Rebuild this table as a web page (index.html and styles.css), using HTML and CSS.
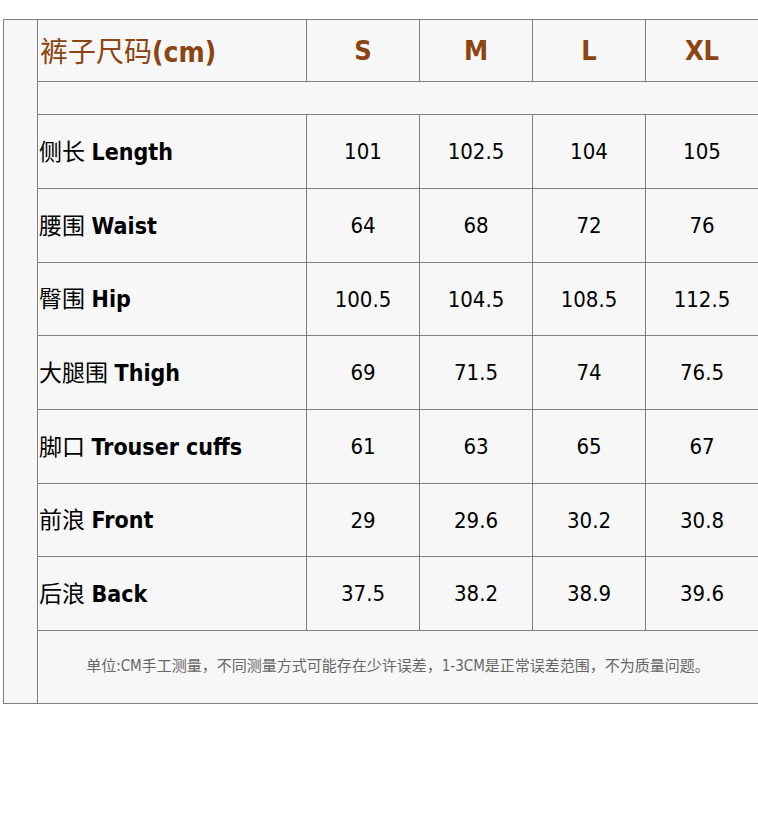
FILE: index.html
```html
<!DOCTYPE html>
<html lang="zh">
<head>
<meta charset="utf-8">
<title>裤子尺码</title>
<link rel="stylesheet" href="styles.css">
</head>
<body>
<table class="size-table">
  <colgroup>
    <col class="c-side">
    <col class="c-label">
    <col class="c-val">
    <col class="c-val">
    <col class="c-val">
    <col class="c-val">
  </colgroup>
  <tr class="r-head">
    <td class="side" rowspan="10"></td>
    <td class="head-title"><span class="cn">裤子尺码</span><b>(cm)</b></td>
    <td class="head-size">S</td>
    <td class="head-size">M</td>
    <td class="head-size">L</td>
    <td class="head-size">XL</td>
  </tr>
  <tr class="r-empty"><td colspan="5"></td></tr>
  <tr class="r-a"><td class="label"><span class="cn">侧长</span> <b>Length</b></td><td>101</td><td>102.5</td><td>104</td><td>105</td></tr>
  <tr class="r-a"><td class="label"><span class="cn">腰围</span> <b>Waist</b></td><td>64</td><td>68</td><td>72</td><td>76</td></tr>
  <tr class="r-b"><td class="label"><span class="cn">臀围</span> <b>Hip</b></td><td>100.5</td><td>104.5</td><td>108.5</td><td>112.5</td></tr>
  <tr class="r-a"><td class="label"><span class="cn">大腿围</span> <b>Thigh</b></td><td>69</td><td>71.5</td><td>74</td><td>76.5</td></tr>
  <tr class="r-a"><td class="label"><span class="cn">脚口</span> <b>Trouser cuffs</b></td><td>61</td><td>63</td><td>65</td><td>67</td></tr>
  <tr class="r-b"><td class="label"><span class="cn">前浪</span> <b>Front</b></td><td>29</td><td>29.6</td><td>30.2</td><td>30.8</td></tr>
  <tr class="r-a"><td class="label"><span class="cn">后浪</span> <b>Back</b></td><td>37.5</td><td>38.2</td><td>38.9</td><td>39.6</td></tr>
  <tr class="r-b"><td class="note" colspan="5">单位:CM手工测量，不同测量方式可能存在少许误差，1-3CM是正常误差范围，不为质量问题。</td></tr>
</table>
</body>
</html>
```

FILE: styles.css
```css
html, body {
  margin: 0;
  padding: 0;
  background: #ffffff;
  overflow: hidden;
}

body {
  font-family: "DejaVu Sans", "Noto Sans CJK SC", sans-serif;
  font-stretch: condensed;
}

.size-table {
  margin: 19px 0 0 3px;
  border-collapse: collapse;
  table-layout: fixed;
  width: 756px;
  background: #f7f7f7;
}

.c-side { width: 34px; }
.c-label { width: 269px; }
.c-val { width: 113px; }

.size-table td {
  border: 1px solid #808080;
  padding: 0;
  text-align: center;
  vertical-align: middle;
  font-size: 22px;
  color: #000;
  white-space: nowrap;
}

.cn {
  font-family: "Noto Sans CJK SC", sans-serif;
  font-weight: 400;
}

.r-head { height: 62px; }
.r-empty { height: 33px; }
.r-a { height: 74px; }
.r-b { height: 73px; }

.size-table .head-title {
  text-align: left;
  color: #8b4513;
  font-size: 28px;
  padding: 0 0 2px 2px;
}

.head-title b { font-weight: 700; }

.size-table .head-size {
  color: #8b4513;
  font-size: 27px;
  font-weight: 700;
}

.size-table .label {
  text-align: left;
  font-size: 23px;
  padding: 0 0 4px 1px;
}

.label b { font-weight: 700; }

.size-table .note {
  font-size: 15px;
  color: #666;
  padding-bottom: 5px;
}
```
